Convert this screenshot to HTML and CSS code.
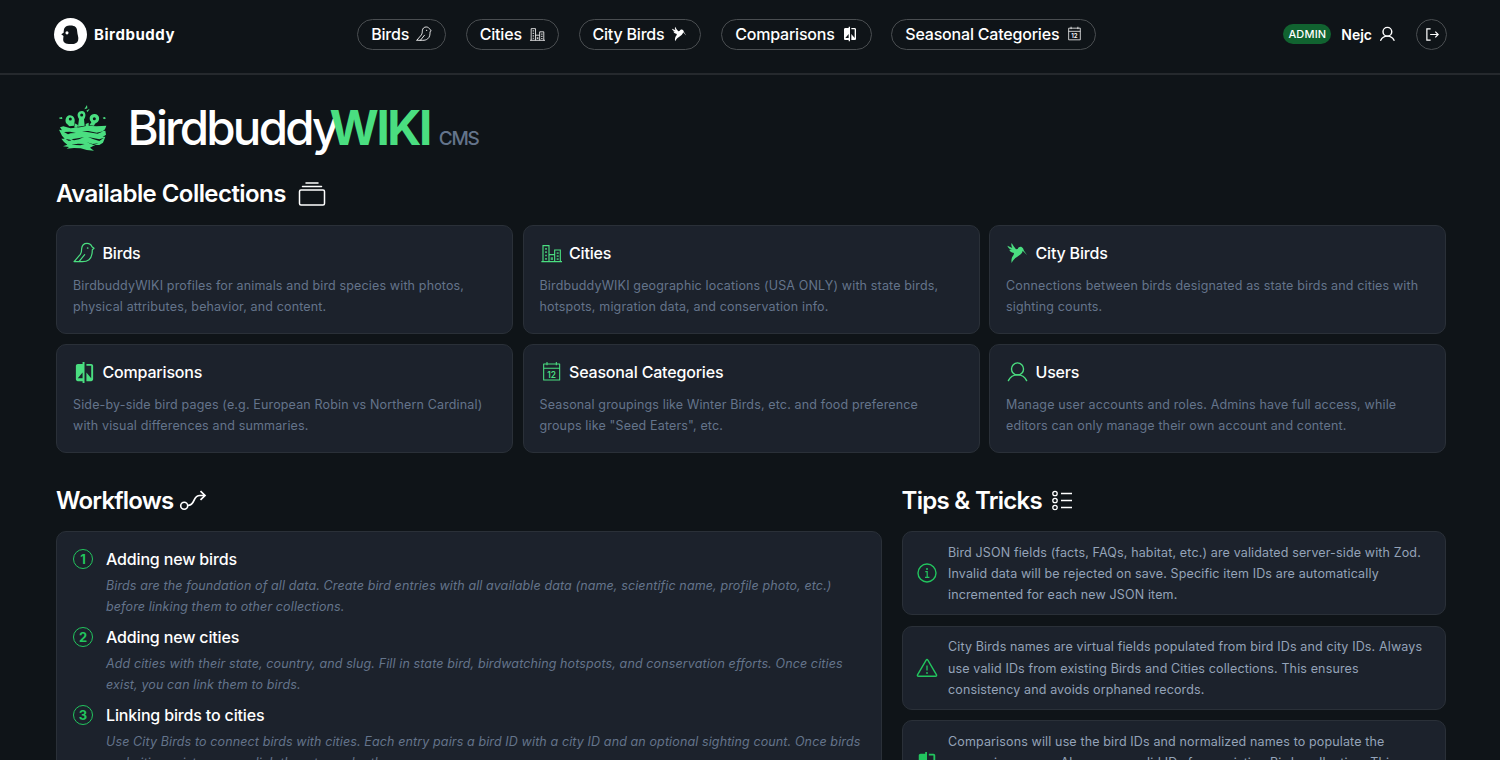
FILE: index.html
```html
<!DOCTYPE html>
<html lang="en">
<head>
    <meta charset="UTF-8">
    <meta name="viewport" content="width=device-width, initial-scale=1.0">
    <title>BirdbuddyWIKI CMS</title>
    <link rel="stylesheet" href="styles.css">
</head>
<body>

    <!-- Shared icons -->
    <svg class="sprite">
        <symbol id="bird" viewBox="0 0 66 66">
            <path d="M4 58L22 37C26 31 26 25 26 20C27 9 34 4 42 4C50 4 55 9 57 14L63 19L58 23C58 36 57 46 48 53C42 58 35 59 28 59H5Q2 59 4 58ZM18 59L35 38" fill="none" stroke="currentColor" stroke-width="3.6" stroke-linejoin="round" stroke-linecap="round"/>
            <circle cx="44" cy="18" r="2.6" fill="currentColor"/>
        </symbol>
        <symbol id="city" viewBox="0 0 66 66">
            <path d="M4 59H66M9 59V11H27V59M27 38H44M44 59V24H61V59" fill="none" stroke="currentColor" stroke-width="3.4"/>
            <path d="M15 18h6v5h-6zM15 28h6v5h-6zM15 38h6v5h-6zM15 48h6v5h-6zM32 46h7v8h-7zM50 31h6v5h-6zM50 40h6v5h-6zM50 49h6v5h-6z" fill="currentColor" opacity=".75"/>
        </symbol>
        <symbol id="hummingbird" viewBox="0 0 66 66">
            <path d="M17 3L23 13L30 22L35 21C38 13 47 12 51 19L54 26L63 39L50 26C49 35 40 40 33 45C26 49 21 55 17 63C15 54 17 45 23 38L24 33C15 32 11 27 10 23L18 24C10 21 6 16 4 11L19 18C16 13 15 8 17 3Z" fill="currentColor"/>
        </symbol>
        <symbol id="compare" viewBox="0 0 24 24">
            <path d="M10 3H5c-1.1 0-2 .9-2 2v14c0 1.1.9 2 2 2h5v2h2V1h-2v2zm0 15H5l5-6v6zm9-15h-5v2h5v13l-5-6v9h5c1.1 0 2-.9 2-2V5c0-1.1-.9-2-2-2z" fill="currentColor"/>
        </symbol>
        <symbol id="calendar" viewBox="0 0 66 66">
            <path d="M11 9H59V57H11ZM11 22H59M21 3V13M49 3V13" fill="none" stroke="currentColor" stroke-width="3.2" stroke-linejoin="round"/>
            <text x="35" y="50" text-anchor="middle" font-size="25" font-weight="600" fill="currentColor">12</text>
        </symbol>
        <symbol id="user" viewBox="0 0 256 256">
            <g fill="none" stroke="currentColor" stroke-linecap="round">
                <circle cx="134" cy="92" r="70"/>
                <path d="M28 228C48 186 88 162 134 162S220 186 240 228"/>
            </g>
        </symbol>
    </svg>

    <header class="topbar">
        <a class="brand">
            <svg class="brand-logo" viewBox="0 0 32 32">
                <circle cx="16" cy="16" r="16" fill="#fff"/>
                <path d="M9.5 12C10 8.5 12.5 7.3 16 7.3C20.5 7.3 22.3 9.3 22.5 13C22.6 16 24.2 18.5 23.4 21.5C22.6 24.5 20 25.2 16.200 25.2C11 25.2 8.700 23.5 8.900 20.5L9.200 17.5L7 15.7L9.300 14.300Z" fill="#0f1418"/>
                <circle cx="12.6" cy="14.4" r="1.5" fill="#fff"/>
            </svg>
            <span>Birdbuddy</span>
        </a>

        <nav class="nav">
            <a class="pill">Birds <svg class="icon"><use href="#bird"/></svg></a>
            <a class="pill">Cities <svg class="icon"><use href="#city"/></svg></a>
            <a class="pill">City Birds <svg class="icon"><use href="#hummingbird"/></svg></a>
            <a class="pill">Comparisons <svg class="icon"><use href="#compare"/></svg></a>
            <a class="pill">Seasonal Categories <svg class="icon"><use href="#calendar"/></svg></a>
        </nav>

        <div class="account">
            <span class="role">ADMIN</span>
            <span class="name">Nejc</span>
            <svg class="icon account-icon"><use href="#user"/></svg>
            <a class="logout">
                <svg viewBox="0 0 16 16"><path d="M6 2H2V14H6M5.5 8H14M11 5L14 8L11 11" fill="none" stroke="currentColor" stroke-width="1.3"/></svg>
            </a>
        </div>
    </header>

    <main class="page">
        <h1 class="title">
            <!-- Nest with three chicks -->
            <svg class="nest" viewBox="0 0 210 195">
                <g fill="#4ade80">
                    <path d="M30 97L40 94L62 100L90 97L112 92L140 94L169 92L165 103L159 108L166 107L168 119L158 126L166 125L159 143L148 150L136 150L128 154L120 158L132 167L110 165L92 160L72 159L50 161L57 156L39 154L52 149L42 141L34 131L44 131L36 122L27 104L36 106Z"/>
                    <path d="M52 88C44 83 45 66 54 62C65 57 76 67 74 79L72 92L58 94Z"/>
                    <path d="M84 95L87 72C78 57 85 48 96 48C108 49 109 64 102 73L104 92Z"/>
                    <path d="M118 91L124 82C113 69 122 56 134 57C148 58 151 73 143 81L135 86L132 92Z"/>
                    <path d="M27 68L36 66L37 72L29 71ZM103 43L111 30L112 40ZM109 47L119 41L113 51ZM158 68L164 66L168 70L162 73ZM74 85L84 90L82 98L73 98ZM107 87L116 83L116 98L107 98Z"/>
                </g>
                <g fill="#0f1418">
                    <circle cx="61" cy="72" r="4.5"/>
                    <circle cx="95" cy="60" r="4.5"/>
                    <circle cx="133" cy="71" r="4.5"/>
                    <path d="M42 111L60 110L78 114L62 115L54 118ZM96 109L115 108L140 113L160 109L143 116L116 112ZM64 133L88 129L102 126L87 133L72 136ZM114 126L133 130L148 133L162 128L148 138L131 133ZM47 132L60 134L64 137L55 137ZM64 149L84 146L104 147L91 151L77 150ZM110 142L128 147L146 145L131 150Z"/>
                </g>
            </svg>
            <span class="title-name">Birdbuddy</span><span class="title-wiki">WIKI</span><span class="title-cms">CMS</span>
        </h1>

        <h2 class="heading">
            <span class="h-collections">Available Collections</span>
            <svg class="heading-icon collections-icon" viewBox="0 0 28 26">
                <path d="M3 9H25Q26.5 9 26.5 10.5V22.5Q26.5 24 25 24H3Q1.5 24 1.5 22.5V10.5Q1.5 9 3 9ZM4.5 5.5H23.5M8 2H20" fill="none" stroke="currentColor" stroke-width="1.5" stroke-linecap="round"/>
            </svg>
        </h2>

        <section class="collections">
            <article class="card">
                <h3><svg class="icon"><use href="#bird"/></svg>Birds</h3>
                <p>BirdbuddyWIKI profiles for animals and bird species with photos,<br>physical attributes, behavior, and content.</p>
            </article>
            <article class="card">
                <h3><svg class="icon"><use href="#city"/></svg>Cities</h3>
                <p>BirdbuddyWIKI geographic locations (USA ONLY) with state birds,<br>hotspots, migration data, and conservation info.</p>
            </article>
            <article class="card">
                <h3><svg class="icon"><use href="#hummingbird"/></svg>City Birds</h3>
                <p>Connections between birds designated as state birds and cities with<br>sighting counts.</p>
            </article>
            <article class="card">
                <h3><svg class="icon compare-icon"><use href="#compare"/></svg>Comparisons</h3>
                <p>Side-by-side bird pages (e.g. European Robin vs Northern Cardinal)<br>with visual differences and summaries.</p>
            </article>
            <article class="card">
                <h3><svg class="icon"><use href="#calendar"/></svg>Seasonal Categories</h3>
                <p>Seasonal groupings like Winter Birds, etc. and food preference<br>groups like "Seed Eaters", etc.</p>
            </article>
            <article class="card">
                <h3><svg class="icon"><use href="#user"/></svg>Users</h3>
                <p>Manage user accounts and roles. Admins have full access, while<br>editors can only manage their own account and content.</p>
            </article>
        </section>

        <div class="columns">
            <section class="workflows">
                <h2 class="heading">
                    <span class="h-workflows">Workflows</span>
                    <svg class="heading-icon workflow-icon" viewBox="0 0 28 26">
                        <path d="M8.7 17.5C17 17.5 13 7.5 21 7.5H25.5M21.5 3.2L26 7.5L21.5 11.8" fill="none" stroke="currentColor" stroke-width="1.7"/>
                        <circle cx="5.2" cy="17.8" r="3.5" fill="none" stroke="currentColor" stroke-width="1.6"/>
                    </svg>
                </h2>
                <ol class="steps">
                    <li>
                        <span class="number">1</span>
                        <div>
                            <h3>Adding new birds</h3>
                            <p>Birds are the foundation of all data. Create bird entries with all available data (name, scientific name, profile photo, etc.)<br>before linking them to other collections.</p>
                        </div>
                    </li>
                    <li>
                        <span class="number">2</span>
                        <div>
                            <h3>Adding new cities</h3>
                            <p>Add cities with their state, country, and slug. Fill in state bird, birdwatching hotspots, and conservation efforts. Once cities<br>exist, you can link them to birds.</p>
                        </div>
                    </li>
                    <li>
                        <span class="number">3</span>
                        <div>
                            <h3>Linking birds to cities</h3>
                            <p>Use City Birds to connect birds with cities. Each entry pairs a bird ID with a city ID and an optional sighting count. Once birds<br>and cities exist, you can link them to each other.</p>
                        </div>
                    </li>
                </ol>
            </section>

            <section class="tips">
                <h2 class="heading">
                    <span class="h-tips">Tips &amp; Tricks</span>
                    <svg class="heading-icon tips-icon" viewBox="0 0 24 26">
                        <g fill="none" stroke="currentColor" stroke-width="1.3">
                            <circle cx="4" cy="5.5" r="2.2"/>
                            <circle cx="4" cy="12.5" r="2.2"/>
                            <circle cx="4" cy="19.5" r="2.2"/>
                            <path d="M10 5.5H21M10 12.5H21M10 19.5H21"/>
                        </g>
                    </svg>
                </h2>
                <div class="tip">
                    <svg class="icon" viewBox="0 0 22 22"><circle cx="11" cy="11" r="9" fill="none" stroke="currentColor" stroke-width="1.4"/><path d="M9.3 9.7H11.2V15.4M9 15.4H13.4" fill="none" stroke="currentColor" stroke-width="1.2"/><circle cx="11" cy="6.9" r="1" fill="currentColor"/></svg>
                    <p>Bird JSON fields (facts, FAQs, habitat, etc.) are validated server-side with Zod.<br>Invalid data will be rejected on save. Specific item IDs are automatically<br>incremented for each new JSON item.</p>
                </div>
                <div class="tip">
                    <svg class="icon" viewBox="0 0 22 22"><path d="M10 3.3Q11 1.8 12 3.3L20.5 17.8Q21 19.2 19.5 19.3H2.5Q1 19.2 1.5 17.8Z" fill="none" stroke="currentColor" stroke-width="1.4"/><path d="M11 8.5V13.5" stroke="currentColor" stroke-width="1.3"/><circle cx="11" cy="16" r=".9" fill="currentColor"/></svg>
                    <p>City Birds names are virtual fields populated from bird IDs and city IDs. Always<br>use valid IDs from existing Birds and Cities collections. This ensures<br>consistency and avoids orphaned records.</p>
                </div>
                <div class="tip">
                    <svg class="icon"><use href="#compare"/></svg>
                    <p>Comparisons will use the bird IDs and normalized names to populate the<br>comparison page. Always use valid IDs from existing Birds collection. This<br>ensures consistency.</p>
                </div>
            </section>
        </div>
    </main>

</body>
</html>
```
FILE: styles.css
```css
* {
    box-sizing: border-box;
}

body {
    margin: 0;
    height: 760px;
    overflow: hidden;
    background-color: #0f1418;
    color: #fff;
    font-family: Inter, "Liberation Sans", sans-serif;
}

h1, h2, h3, p, ol {
    margin: 0;
    padding: 0;
    font-weight: 500;
    white-space: nowrap;
}

.sprite {
    display: none;
}

.icon {
    width: 22px;
    height: 22px;
    flex: none;
    stroke-width: 16px;
}

/* Top bar */
.topbar {
    display: flex;
    justify-content: space-between;
    align-items: center;
    height: 75px;
    padding: 0 53px 5px 54px;
    border-bottom: 2px solid #25292d;
}

.brand {
    display: flex;
    align-items: center;
    gap: 7px;
    font-size: 15px;
    font-weight: 700;
    letter-spacing: 0.55px;
}

.brand-logo {
    width: 33px;
    height: 33px;
}

.nav {
    display: flex;
    gap: 19.7px;
    margin-left: -5px;
}

.pill {
    display: flex;
    align-items: center;
    gap: 7px;
    height: 31px;
    padding: 0 13px;
    border: 1px solid #4a4e51;
    border-radius: 16px;
    font-size: 16px;
    font-weight: 500;
    line-height: 28px;
    letter-spacing: -0.2px;
    white-space: nowrap;
}

.pill .icon {
    width: 16px;
    height: 16px;
}

.account {
    display: flex;
    align-items: center;
}

.role {
    height: 20px;
    padding: 0 5px;
    border-radius: 10px;
    background-color: #116330;
    font-size: 11px;
    line-height: 20px;
    font-weight: 500;
    letter-spacing: 0.15px;
}

.name {
    margin-left: 10px;
    font-size: 14px;
    font-weight: 600;
}

.account-icon {
    width: 16px;
    height: 16px;
    margin: 0 21px 0 7px;
    stroke-width: 23px;
}

.logout {
    display: flex;
    align-items: center;
    justify-content: center;
    width: 31px;
    height: 31px;
    border: 1px solid #4a4e51;
    border-radius: 50%;
}

.logout svg {
    width: 15px;
    height: 15px;
    margin-left: 1px;
}

/* Title */
.page {
    padding: 20px 54px 0 56px;
}

.title {
    display: flex;
    align-items: baseline;
    height: 81px;
    line-height: 66px;
    font-size: 47.5px;
}

.nest {
    align-self: flex-start;
    width: 70px;
    height: 65px;
    margin: 0 7.5px 0 -6px;
}

.title-name {
    letter-spacing: -2.8px;
}

.title-wiki {
    margin-left: -7px;
    color: #4ade80;
    font-weight: 700;
    letter-spacing: -2.5px;
}

.title-cms {
    margin-left: 9px;
    color: #64748b;
    font-size: 19px;
    letter-spacing: -1.2px;
}

.heading {
    display: flex;
    align-items: center;
    height: 36px;
    font-size: 24px;
    font-weight: 600;
    line-height: 36px;
}

.h-collections {
    letter-spacing: -0.56px;
}

.h-workflows {
    letter-spacing: -0.8px;
}

.h-tips {
    letter-spacing: -0.7px;
}

.heading-icon {
    height: 26px;
}

.collections-icon {
    width: 28px;
    margin-left: 12px;
}

.workflow-icon {
    width: 28px;
    margin-left: 6px;
}

.tips-icon {
    width: 24px;
    margin-left: 9px;
}

/* Collection cards */
.collections {
    display: grid;
    grid-template-columns: repeat(3, 1fr);
    gap: 9.5px;
    margin-top: 12.5px;
    margin-bottom: 30px;
}

.card, .steps, .tip {
    background-color: #1c222c;
    border: 1px solid #2a3038;
    border-radius: 10px;
}

.card {
    height: 109.5px;
    padding: 16px;
}

.card h3 {
    display: flex;
    align-items: center;
    gap: 7.5px;
    height: 23px;
    font-size: 16px;
    letter-spacing: -0.18px;
}

.card .icon {
    color: #4ade80;
}

.card .compare-icon {
    width: 23px;
    height: 23px;
    margin-right: -1px;
}

.card p {
    margin-top: 10.5px;
    color: #64748b;
    font-size: 12.5px;
    font-weight: 400;
    letter-spacing: 0.15px;
    line-height: 21.2px;
}

/* Lower half */
.columns {
    display: grid;
    grid-template-columns: 826px 1fr;
    gap: 19.5px;
}

.steps {
    list-style: none;
    margin-top: 12px;
    height: 300px;
    padding: 15px 16px;
}

.steps li {
    display: flex;
    gap: 13px;
    height: 78px;
}

.steps h3 {
    font-size: 16px;
    letter-spacing: -0.16px;
    line-height: 25px;
}

.steps p {
    margin-top: 2.6px;
    color: #64748b;
    font-size: 12.5px;
    font-weight: 400;
    font-style: italic;
    letter-spacing: 0.12px;
    line-height: 21.2px;
}

.number {
    flex: none;
    width: 20px;
    height: 20px;
    margin-top: 2px;
    border: 1px solid #22c55e;
    border-radius: 50%;
    color: #22c55e;
    font-size: 13px;
    font-weight: 700;
    line-height: 18px;
    text-align: center;
}

.tips .heading {
    margin-bottom: 12px;
}

.tip {
    display: flex;
    align-items: center;
    gap: 10.5px;
    height: 84px;
    margin-bottom: 10.5px;
    padding: 0 13px;
}

.tip .icon {
    color: #22c55e;
}

.tip p {
    padding-top: 1.5px;
    color: #94a3b8;
    font-size: 12.5px;
    font-weight: 400;
    letter-spacing: 0.14px;
    line-height: 21.2px;
}
```
